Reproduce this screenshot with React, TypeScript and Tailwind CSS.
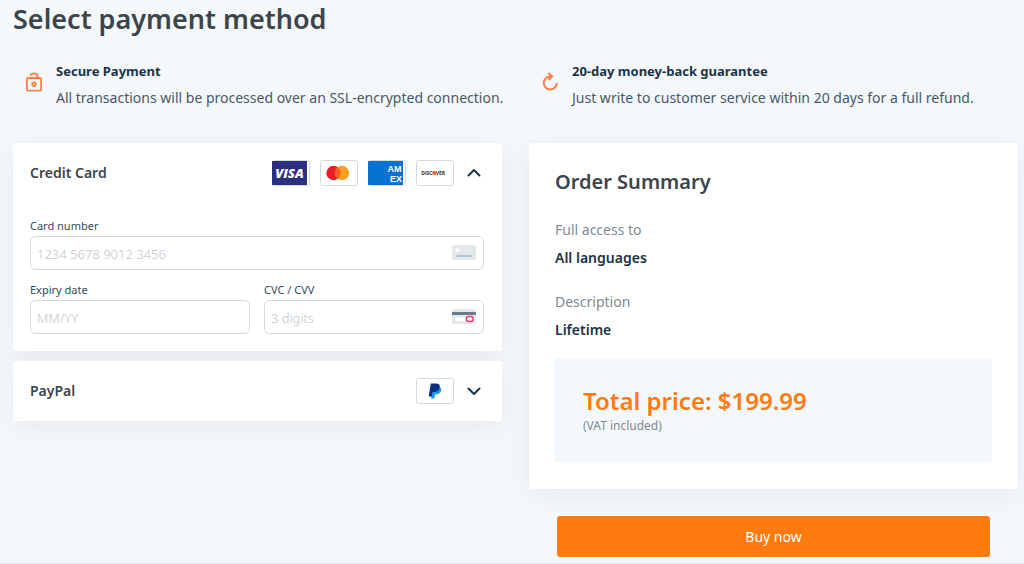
import { useState } from "react";

type PayMethod = "card" | "paypal";

const VisaBadge = () => (
  <svg width="38" height="26" viewBox="0 0 38 26" role="img" aria-label="Visa">
    <rect x="0.5" y="0.5" width="37" height="25" rx="2" fill="#fff" stroke="#d3dade" />
    <rect x="0" y="1" width="35" height="24" fill="#2a307f" />
    <text
      x="17.5"
      y="18"
      textAnchor="middle"
      fontFamily="Open Sans, sans-serif"
      fontSize="13"
      fontWeight="800"
      fontStyle="italic"
      fill="#fff"
    >
      VISA
    </text>
  </svg>
);

const MastercardBadge = () => (
  <svg width="38" height="26" viewBox="0 0 38 26" role="img" aria-label="Mastercard">
    <rect x="0.5" y="0.5" width="37" height="25" rx="2" fill="#fff" stroke="#d3dade" />
    <circle cx="13.5" cy="13" r="7.2" fill="#eb1c26" />
    <circle cx="22" cy="13" r="7.2" fill="#f99f1f" />
    <path d="M17.75 7.2a7.2 7.2 0 0 1 0 11.6a7.2 7.2 0 0 1 0-11.6z" fill="#f26322" />
  </svg>
);

const AmexBadge = () => (
  <svg width="38" height="26" viewBox="0 0 38 26" role="img" aria-label="American Express">
    <rect x="0.5" y="0.5" width="37" height="25" rx="2" fill="#fff" stroke="#d3dade" />
    <rect x="0" y="1" width="35" height="24" fill="#0673d3" />
    <g fontFamily="Liberation Sans, sans-serif" fontSize="9" fontWeight="700" fill="#fff">
      <text x="19.5" y="11.5">AM</text>
      <text x="22" y="21.5">EX</text>
    </g>
  </svg>
);

const DiscoverBadge = () => (
  <svg width="38" height="26" viewBox="0 0 38 26" role="img" aria-label="Discover">
    <rect x="0.5" y="0.5" width="37" height="25" rx="2" fill="#fff" stroke="#d3dade" />
    <g fontFamily="Open Sans, sans-serif" fontSize="5" fontWeight="700" fill="#2b2b33">
      <text x="16.5" y="14.8" textAnchor="end">DISC</text>
      <text x="19.8" y="14.8">VER</text>
    </g>
    <circle cx="18.2" cy="13" r="1.9" fill="#f0581f" />
  </svg>
);

const PaypalBadge = () => (
  <svg width="38" height="26" viewBox="0 0 38 26" role="img" aria-label="PayPal">
    <rect x="0.5" y="0.5" width="37" height="25" rx="2" fill="#fff" stroke="#d3dade" />
    <path
      d="M16.8 9h5.800c2.200 0 2.900 1.500 2.500 3.500-.5 2.600-2 3.800-4.400 3.800h-1c-.4 0-.6.2-.7.600l-.6 3.500h-3.300z"
      fill="#1a9ae0"
    />
    <path
      d="M14.800 5.500h5.300c2.900 0 4.100 1.500 3.600 4.100-.5 2.900-2.300 4.300-5.100 4.300h-1.500c-.4 0-.6.2-.7.600l-.6 3.900h-3.100z"
      fill="#0b3285"
    />
  </svg>
);

const Chevron = ({ open }: { open: boolean }) => (
  <svg width="20" height="20" viewBox="0 0 20 20" fill="none" stroke="#1c3347" strokeWidth="2">
    <path
      d={open ? "M4.5 12.5l5.500-5.500 5.500 5.500" : "M4.500 7.500l5.500 5.500 5.500-5.500"}
      strokeLinecap="round"
      strokeLinejoin="round"
    />
  </svg>
);

const LockIcon = () => (
  <svg width="16" height="20" viewBox="0 0 16 20" fill="none" stroke="#ff7f45" strokeWidth="1.800">
    <rect x="0.900" y="6" width="14.200" height="12.600" rx="1.200" />
    <path d="M4.400 3.800c.5-1.500 1.800-2.500 3.600-2.500 2.100 0 3.600 1.400 3.600 3.400v1.300" />
    <circle cx="8" cy="12.300" r="1.800" />
  </svg>
);

const RefreshIcon = () => (
  <svg width="16" height="20" viewBox="0 0 16 20" fill="none" stroke="#ff7f45" strokeWidth="2">
    <path d="M9.800 4.400H8.400a6.500 6.500 0 1 0 6.400 6.500" />
    <path d="M6.400 1l3.700 3.500-3.700 3.500" />
  </svg>
);

const CardFrontIcon = () => (
  <svg width="24" height="16" viewBox="0 0 24 16" className="shrink-0">
    <rect width="24" height="15" rx="2" fill="#e3e8eb" />
    <rect x="3.500" y="3.500" width="4" height="3.500" rx="1" fill="#fff" />
    <rect x="3.500" y="10" width="17" height="2" rx="1" fill="#bcc5cb" />
  </svg>
);

const CardBackIcon = () => (
  <svg width="24" height="16" viewBox="0 0 24 16" className="shrink-0">
    <rect width="24" height="15" rx="2" fill="#e3e8eb" />
    <rect y="3" width="24" height="3" fill="#6d7a87" />
    <rect x="3.500" y="8.500" width="12" height="3.500" rx="1" fill="#fff" />
    <rect x="14.300" y="7.600" width="6.800" height="5" rx="2.500" fill="#fff" stroke="#ea3f72" strokeWidth="1.500" />
  </svg>
);

type BenefitProps = {
  icon: React.ReactNode;
  title: string;
  text: string;
};

const Benefit = ({ icon, title, text }: BenefitProps) => (
  <div className="flex items-start gap-[14px] pl-[13px]">
    <span className="mt-[14px] shrink-0">{icon}</span>
    <div className="whitespace-nowrap">
      <h2 className="text-[13px] leading-[27px] font-bold text-[#1c3347]">{title}</h2>
      <p className="text-[14px] leading-[26px] text-[#475968]">{text}</p>
    </div>
  </div>
);

type FieldProps = {
  id: string;
  label: string;
  placeholder: string;
  icon?: React.ReactNode;
};

const Field = ({ id, label, placeholder, icon }: FieldProps) => (
  <div className="min-w-0">
    <label htmlFor={id} className="block text-[11px] leading-5 text-[#34495c]">
      {label}
    </label>
    <div className="flex h-[34px] items-center rounded-[5px] border border-[#d3dade] bg-white pr-[7px] pl-[6px]">
      <input
        id={id}
        type="text"
        placeholder={placeholder}
        className="w-full min-w-0 pt-1 text-[13px] font-light text-[#34495c] placeholder:text-[#bcc5cb] focus:outline-none"
      />
      {icon}
    </div>
  </div>
);

const App = () => {
  const [method, setMethod] = useState<PayMethod | null>("card");

  const toggle = (next: PayMethod) => {
    setMethod(method === next ? null : next);
  };

  return (
    <div className="min-h-screen border-b border-[#e2e6e9] bg-[#f4f8fb] pr-[6px] pb-[6px] pl-[13px] font-['Noto_Sans',sans-serif]">
      <h1 className="text-[27px] leading-[38px] font-semibold text-[#3d454c]">
        Select payment method
      </h1>

      <div className="mt-5 grid grid-cols-2 gap-[27px]">
        <Benefit
          icon={<LockIcon />}
          title="Secure Payment"
          text="All transactions will be processed over an SSL-encrypted connection."
        />
        <Benefit
          icon={<RefreshIcon />}
          title="20-day money-back guarantee"
          text="Just write to customer service within 20 days for a full refund."
        />
      </div>

      <div className="mt-8 grid grid-cols-2 items-start gap-[27px]">
        <div className="flex flex-col gap-[10px]">
          <section className="rounded-[3px] bg-white pr-[18px] pl-[17px] shadow-[0_6px_24px_rgba(40,60,70,0.07)]">
            <button
              type="button"
              aria-expanded={method === "card"}
              onClick={() => toggle("card")}
              className="flex h-[60px] w-full items-center gap-[10px]"
            >
              <span className="mr-auto text-[14px] leading-5 font-semibold text-[#3d454c]">
                Credit Card
              </span>
              <VisaBadge />
              <MastercardBadge />
              <AmexBadge />
              <DiscoverBadge />
              <Chevron open={method === "card"} />
            </button>
            {method === "card" && (
              <form className="flex flex-col gap-[10px] pt-[13px] pb-[17px]">
                <Field
                  id="card-number"
                  label="Card number"
                  placeholder="1234 5678 9012 3456"
                  icon={<CardFrontIcon />}
                />
                <div className="grid grid-cols-2 gap-[14px]">
                  <Field id="expiry" label="Expiry date" placeholder="MM/YY" />
                  <Field
                    id="cvc"
                    label="CVC / CVV"
                    placeholder="3 digits"
                    icon={<CardBackIcon />}
                  />
                </div>
              </form>
            )}
          </section>

          <section className="rounded-[3px] bg-white pr-[18px] pl-[17px] shadow-[0_6px_24px_rgba(40,60,70,0.07)]">
            <button
              type="button"
              aria-expanded={method === "paypal"}
              onClick={() => toggle("paypal")}
              className="flex h-[60px] w-full items-center gap-[10px]"
            >
              <span className="mr-auto text-[14px] leading-5 font-semibold text-[#3d454c]">
                PayPal
              </span>
              <PaypalBadge />
              <Chevron open={method === "paypal"} />
            </button>
          </section>
        </div>

        <div>
          <section className="rounded-[3px] bg-white px-[26px] pt-[25px] pb-[27px] shadow-[0_6px_24px_rgba(40,60,70,0.07)]">
            <h2 className="text-[20px] leading-7 font-semibold text-[#3d454c]">Order Summary</h2>
            <dl className="mt-5 text-[14px] leading-7">
              <dt className="text-[#7d8b94]">Full access to</dt>
              <dd className="font-semibold text-[#1c3347]">All languages</dd>
              <dt className="mt-4 text-[#7d8b94]">Description</dt>
              <dd className="font-semibold text-[#1c3347]">Lifetime</dd>
            </dl>
            <div className="mt-[14px] bg-[#f4f8fb] px-7 pt-7 pb-[26px]">
              <p className="text-[24px] leading-[30px] font-semibold text-[#ff7a0f]">
                Total price: $199.99
              </p>
              <p className="text-[12px] leading-5 text-[#7d8b94]">(VAT included)</p>
            </div>
          </section>
          <div className="mt-[27px] px-7">
            <button
              type="button"
              className="h-[41px] w-full rounded-[3px] bg-[#ff7a0f] text-[14px] text-white hover:bg-[#f06d00]"
            >
              Buy now
            </button>
          </div>
        </div>
      </div>
    </div>
  );
};

export default App;
